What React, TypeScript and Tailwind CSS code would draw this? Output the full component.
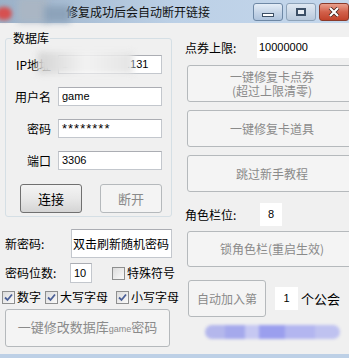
import React from "react";

const cjk = "font-['Noto_Sans_CJK_SC','Noto_Sans',sans-serif]";
const latin = "font-['Liberation_Sans','DejaVu_Sans',sans-serif]";

function Button({
  children,
  className = "",
  primary = false,
}: {
  children: React.ReactNode;
  className?: string;
  primary?: boolean;
}) {
  const look = primary
    ? "border-[#707070] bg-gradient-to-b from-[#f4f4f4] via-[#e8e8e8] to-[#d4d4d4] text-black"
    : "border-[#b5b9bc] bg-[#f4f4f4] text-[#8a8a8a]";
  return (
    <div
      className={`flex shrink-0 flex-col items-center justify-center whitespace-nowrap rounded-[3px] border text-[12px] leading-[14px] ${look} ${className}`}
    >
      {children}
    </div>
  );
}

function Field({ children, className = "" }: { children?: React.ReactNode; className?: string }) {
  return (
    <div
      className={`flex shrink-0 items-center overflow-hidden whitespace-nowrap border border-[#c3c7cd] border-t-[#abadb3] bg-white px-[3px] text-[11px] text-black ${latin} ${className}`}
    >
      {children}
    </div>
  );
}

function Check({ label, checked = true }: { label: string; checked?: boolean }) {
  return (
    <div className="flex items-center gap-[2px] whitespace-nowrap">
      <span className="flex h-[13px] w-[13px] items-center justify-center border border-[#8e8f8f] bg-gradient-to-br from-[#dcdcdc] to-[#fafafa]">
        {checked && (
          <svg width="9" height="9" viewBox="0 0 9 9">
            <path d="M1 4.5 L3.5 7 L8 1.5" fill="none" stroke="#4a5f97" strokeWidth="1.8" />
          </svg>
        )}
      </span>
      <span className="text-[12px] leading-[14px]">{label}</span>
    </div>
  );
}

function DbRow({ label, children }: { label: string; children: React.ReactNode }) {
  return (
    <div className="flex h-[19px] items-center">
      <span className="w-[45px] text-right text-[12px] leading-[14px]">{label}</span>
      <Field className="ml-[7px] h-[19px] w-[104px]">{children}</Field>
    </div>
  );
}

export default function App() {
  return (
    <div className={`flex h-[358px] w-[349px] flex-col overflow-hidden bg-[#f0f0f0] text-black ${cjk}`}>
      {/* title bar */}
      <div className="relative flex h-[23px] shrink-0 items-start bg-gradient-to-r from-[#9bb1c8] via-[#bcd0e6] to-[#c4d7ec]">
        <div className="absolute left-[-4px] top-[7px] h-[13px] w-[16px] rounded-full bg-[#d65050] blur-[2px]" />
        <div className="absolute left-[18px] top-[-2px] h-[24px] w-[30px] bg-[#aab6c4] blur-[3px]" />
        <div className="absolute left-[44px] top-[6px] h-[16px] w-[26px] bg-[#8da3ba] blur-[3px]" />
        <span className="ml-[66px] mt-[4px] text-[12px] leading-[15px] text-[#111]">修复成功后会自动断开链接</span>
        <div className="ml-auto mt-[3px] flex gap-[3px]">
          <div className="flex h-[18px] w-[30px] items-center justify-center rounded-[3px] border border-[#6e88a5] bg-gradient-to-b from-[#e4edf7] via-[#c7d6e8] to-[#aec3dc]">
            <span className="mt-[5px] h-[4px] w-[12px] border border-[#3c4f66] bg-white" />
          </div>
          <div className="flex h-[18px] w-[30px] items-center justify-center rounded-[3px] border border-[#8ea3b9] bg-gradient-to-b from-[#dfe8f2] via-[#cdd9e7] to-[#b9c9dc]">
            <span className="h-[8px] w-[10px] border-[2px] border-[#3c4f66] bg-[#e9eef4]" />
          </div>
          <div className="flex h-[18px] w-[30px] items-center justify-center rounded-[3px] border border-[#8a3a2a] bg-gradient-to-b from-[#e9a08e] via-[#d2604a] to-[#c2422a]">
            <svg width="12" height="10" viewBox="0 0 12 10">
              <path d="M2 1 L10 9 M10 1 L2 9" stroke="#3a1a14" strokeWidth="3.6" />
              <path d="M2 1 L10 9 M10 1 L2 9" stroke="#ffffff" strokeWidth="2.2" />
            </svg>
          </div>
        </div>
      </div>

      {/* client */}
      <div className="flex flex-1">
        {/* left column */}
        <div className="flex w-[175px] shrink-0 flex-col pl-[5px]">
          <div className="relative mt-[15px] flex h-[179px] w-[167px] flex-col rounded-[3px] border border-[#d5dfe5] pt-[16px]">
            <span className="absolute left-[6px] top-[-8px] bg-[#f0f0f0] px-[1px] text-[12px] leading-[14px]">数据库</span>
            <div className="relative flex flex-col gap-[13px]">
              <DbRow label="IP地址">
                <span className="w-[65px]">1</span>
                <span>.131</span>
              </DbRow>
              <div className="absolute left-[32px] top-[-3px] h-[22px] w-[95px] bg-gradient-to-r from-[#d4d4d4] via-[#f2f2f2] to-[#e4e4e4] blur-[3px]" />
              <DbRow label="用户名">game</DbRow>
              <DbRow label="密码">
                <span className="text-[13px] tracking-[1px]">********</span>
              </DbRow>
              <DbRow label="端口">3306</DbRow>
            </div>
            <div className="mt-[14px] flex gap-[18px] pl-[14px]">
              <Button primary className="h-[29px] w-[62px] text-[13px]">
                连接
              </Button>
              <Button className="h-[29px] w-[62px] text-[13px]">断开</Button>
            </div>
          </div>

          <div className="mt-[12px] flex h-[29px] items-center">
            <span className="w-[66px] text-[12px] leading-[14px]">新密码:</span>
            <Field className={`h-[29px] w-[101px] !px-[1px] text-[12px] ${cjk}`}>双击刷新随机密码</Field>
          </div>

          <div className="mt-[5px] flex h-[20px] items-center">
            <span className="w-[66px] text-[12px] leading-[14px]">密码位数:</span>
            <Field className="h-[20px] w-[22px]">10</Field>
            <div className="ml-[20px]">
              <Check label="特殊符号" checked={false} />
            </div>
          </div>

          <div className="-ml-[3px] mt-[7px] flex h-[14px] items-center">
            <Check label="数字" />
            <div className="ml-[4px]">
              <Check label="大写字母" />
            </div>
            <div className="ml-[8px]">
              <Check label="小写字母" />
            </div>
          </div>

          <Button className="mt-[5px] h-[38px] w-[165px] text-[13px]">
            <span>
              一键修改数据库<span className={`text-[9px] ${latin}`}>game</span>密码
            </span>
          </Button>
        </div>

        {/* right column */}
        <div className="flex flex-1 flex-col pl-[10px]">
          <div className="mt-[14px] flex h-[21px] items-center">
            <span className="w-[72px] text-[12px] leading-[14px]">点券上限:</span>
            <div className={`flex h-[21px] flex-1 items-center bg-white px-[2px] text-[11px] ${latin}`}>10000000</div>
          </div>

          <Button className="ml-[2px] mt-[7px] h-[37px] w-[170px]">
            <span>一键修复卡点券</span>
            <span>(超过上限清零)</span>
          </Button>
          <Button className="ml-[2px] mt-[8px] h-[37px] w-[170px]">一键修复卡道具</Button>
          <Button className="ml-[2px] mt-[8px] h-[37px] w-[170px]">跳过新手教程</Button>

          <div className="mt-[11px] flex h-[23px] items-center">
            <span className="w-[75px] text-[12px] leading-[14px]">角色栏位:</span>
            <div className={`flex h-[23px] w-[22px] items-center justify-center bg-white text-[11px] ${latin}`}>8</div>
          </div>

          <Button className="ml-[2px] mt-[5px] h-[36px] w-[170px]">锁角色栏(重启生效)</Button>

          <div className="mt-[13px] flex h-[37px] items-center">
            <Button className="ml-[3px] h-[37px] w-[78px]">自动加入第</Button>
            <div className={`ml-[9px] flex h-[23px] w-[23px] items-center justify-center bg-white text-[11px] ${latin}`}>1</div>
            <span className="ml-[3px] text-[13px] leading-[15px]">个公会</span>
          </div>

          <div className="ml-[20px] mt-[8px] flex h-[14px] w-[135px] blur-[1.5px]">
            <div className="h-full w-[20px] rounded-l-full bg-[#b4b7ec]" />
            <div className="h-full w-[20px] bg-[#a5a9ec]" />
            <div className="h-full w-[14px] bg-[#c6c8f2]" />
            <div className="h-full w-[26px] bg-[#9b9fee]" />
            <div className="h-full w-[30px] bg-[#b3b6f0]" />
            <div className="h-full w-[25px] rounded-r-full bg-[#bfc2f0]" />
          </div>
        </div>
      </div>

      <div className="h-[4px] shrink-0 bg-[#bdd0e6]" />
    </div>
  );
}
